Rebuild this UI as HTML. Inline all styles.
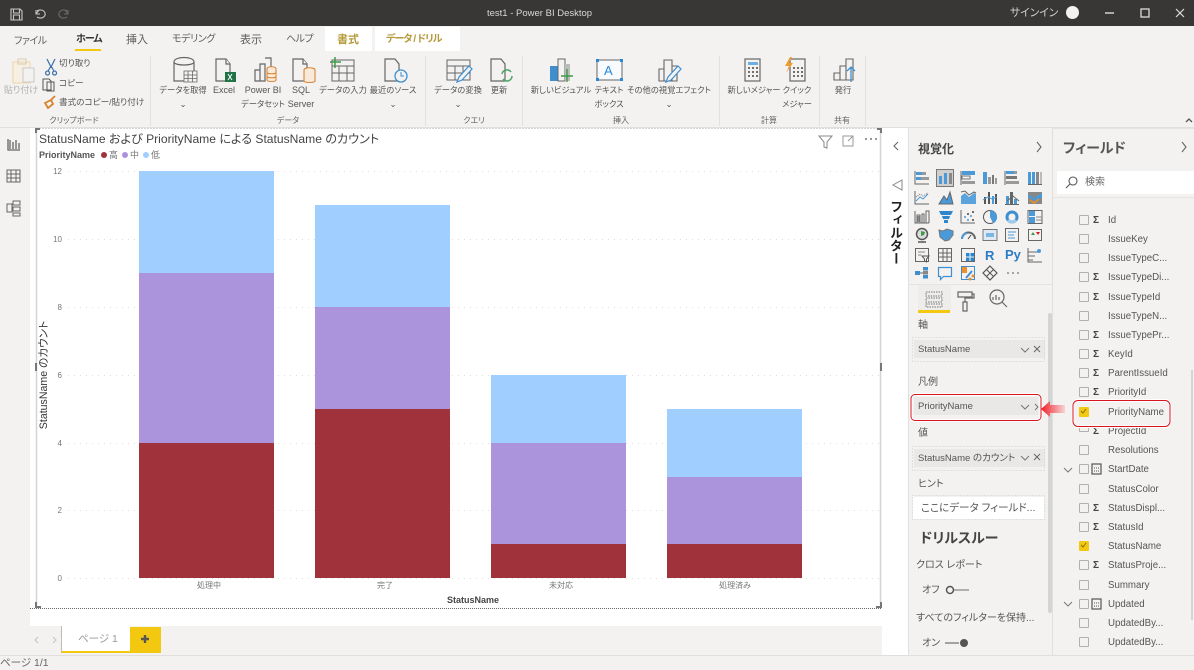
<!DOCTYPE html>
<html lang="ja"><head><meta charset="utf-8"><title>test1 - Power BI Desktop</title>
<style>
html,body{margin:0;padding:0;width:1194px;height:670px;overflow:hidden;background:#f3f2f1}
body{font-family:"Liberation Sans","Noto Sans CJK JP",sans-serif;color:#555;position:relative;font-feature-settings:"palt";filter:blur(.3px)}
div,span{position:absolute;white-space:nowrap}
i{font-style:normal;font-size:9px}
svg{position:absolute;left:0;top:0}
.r{font-size:8.300px;line-height:13.500px;text-align:center;transform:translateX(-50%);color:#555}
.c{font-size:8.600px;line-height:13.500px;color:#555}
.g{font-size:8px;line-height:12px;transform:translateX(-50%);color:#666}
.t{font-size:10px;top:32px;line-height:16px;color:#605e5c}
.f{font-size:9.700px;left:1108px;line-height:14px;color:#555;margin-top:1px}
.cb{left:1079px;width:8px;height:8px;border:1px solid #b0b0b0;border-radius:1px;background:#f3f2f1}
.s{left:1093px;font-size:10px;font-weight:bold;line-height:14px;color:#444;margin-top:1px}
.l{font-size:10px;color:#555;line-height:14px;margin-top:1px}
.w{background:#e9e8e7;left:914px;width:131px;height:18px;font-size:9.500px;line-height:20px;text-indent:4px;color:#555}
.y{font-size:8px;color:#777;width:24px;text-align:right;left:38px;line-height:10px;margin-top:1px}
.x{font-size:8px;color:#777;top:580px;line-height:11px;transform:translateX(-50%)}
</style></head><body>

<div style="left:0;top:0;width:1194px;height:26px;background:#383735"></div>
<div style="left:487px;top:6px;font-size:9.500px;line-height:15px;color:#d8d8d8">test1 - Power BI Desktop</div>
<div style="left:1010px;top:6px;font-size:10.800px;line-height:15px;color:#d0d0d0">サインイン</div>
<div style="left:1066px;top:6px;width:13px;height:13px;border-radius:50%;background:#f2f2f2"></div>

<div style="left:325px;top:27px;width:47px;height:24px;background:#fff"></div>
<div style="left:375px;top:27px;width:85px;height:24px;background:#fff"></div>
<div class="t" style="left:14px;top:34px;letter-spacing:-.5px">ファイル</div>
<div class="t" style="left:76px;color:#333;font-weight:bold;letter-spacing:-1px">ホーム</div>
<div style="left:75px;top:49px;width:26px;height:2px;background:#f2c811"></div>
<div class="t" style="left:126px;font-size:11px">挿入</div>
<div class="t" style="left:172px;letter-spacing:-.4px">モデリング</div>
<div class="t" style="left:240px;font-size:11px">表示</div>
<div class="t" style="left:286px;letter-spacing:-.5px">ヘルプ</div>
<div class="t" style="left:337px;font-size:11px;color:#b59a3a;font-weight:bold">書式</div>
<div class="t" style="left:386px;color:#b59a3a;font-weight:bold;letter-spacing:-.9px">データ / ドリル</div>

<div class="r" style="left:21px;top:84px;color:#b0b0b0;font-size:9px">貼り付け</div>
<div class="c" style="left:59px;top:57px">切り取り</div>
<div class="c" style="left:59px;top:77px">コピー</div>
<div class="c" style="left:59px;top:96px">書式のコピー/貼り付け</div>
<div class="g" style="left:74px;top:115px">クリップボード</div>
<div class="r" style="left:183px;top:84px">データを取得<br>⌄</div>
<div class="r" style="left:224px;top:84px"><i>Excel</i></div>
<div class="r" style="left:263px;top:84px"><i>Power BI</i><br>データセット</div>
<div class="r" style="left:301px;top:84px"><i>SQL</i><br><i>Server</i></div>
<div class="r" style="left:343px;top:84px">データの入力</div>
<div class="r" style="left:393px;top:84px">最近のソース<br>⌄</div>
<div class="g" style="left:288px;top:115px">データ</div>
<div class="r" style="left:458px;top:84px">データの変換<br>⌄</div>
<div class="r" style="left:499px;top:84px">更新</div>
<div class="g" style="left:474px;top:115px">クエリ</div>
<div class="r" style="left:561px;top:84px">新しいビジュアル</div>
<div class="r" style="left:609px;top:84px">テキスト<br>ボックス</div>
<div class="r" style="left:669px;top:84px">その他の視覚エフェクト<br>⌄</div>
<div class="g" style="left:621px;top:115px">挿入</div>
<div class="r" style="left:754px;top:84px">新しいメジャー</div>
<div class="r" style="left:797px;top:84px">クイック<br>メジャー</div>
<div class="g" style="left:769px;top:115px">計算</div>
<div class="r" style="left:843px;top:84px">発行</div>
<div class="g" style="left:842px;top:115px">共有</div>

<div style="left:0;top:127px;width:1194px;height:1px;background:#e1dfdd"></div>
<div style="left:30px;top:128px;width:852px;height:498px;background:#fff"></div>
<div style="left:882px;top:128px;width:26px;height:527px;background:#fff"></div>
<div style="left:0;top:655px;width:1194px;height:15px;background:#f3f2f1;border-top:1px solid #e1dfdd;box-sizing:border-box"></div>

<div style="left:39px;top:131px;font-size:12.100px;line-height:16px;color:#444">StatusName および PriorityName による StatusName のカウント</div>
<div style="left:39px;top:149px;font-size:9px;line-height:13px;font-weight:bold;color:#555">PriorityName</div>
<div style="left:109px;top:148px;font-size:9px;line-height:14px;color:#777">高</div>
<div style="left:130px;top:148px;font-size:9px;line-height:14px;color:#777">中</div>
<div style="left:151px;top:148px;font-size:9px;line-height:14px;color:#777">低</div>
<div class="y" style="top:166px">12</div>
<div class="y" style="top:234px">10</div>
<div class="y" style="top:302px">8</div>
<div class="y" style="top:370px">6</div>
<div class="y" style="top:438px">4</div>
<div class="y" style="top:505px">2</div>
<div class="y" style="top:573px">0</div>
<div class="x" style="left:209px">処理中</div>
<div class="x" style="left:385px">完了</div>
<div class="x" style="left:561px">未対応</div>
<div class="x" style="left:735px">処理済み</div>
<div style="left:447px;top:594px;font-size:9px;line-height:12px;font-weight:bold;color:#444">StatusName</div>
<div style="left:-16px;top:369px;width:120px;height:12px;text-align:center;font-size:10.600px;line-height:12px;color:#333;transform:rotate(-90deg)">StatusName のカウント</div>

<div style="left:61px;top:626px;width:68px;height:25px;background:#fff;border-left:1px solid #bbb;border-bottom:2px solid #f2c811"></div>
<div style="left:78px;top:632px;font-size:10.500px;line-height:14px;color:#999">ページ 1</div>
<div style="left:130px;top:627px;width:31px;height:26px;background:#f2c811"></div>
<div style="left:0;top:656px;font-size:10.500px;line-height:15px;color:#666">ページ 1/1</div>

<svg width="1194" height="670" viewBox="0 0 1194 670" fill="none">
 <g stroke="#c8c8c8" stroke-width="1.100"><path d="M11 9h9l2 2v9H11zM13.500 9v4h6V9M13.500 20v-5h6v5"/></g>
 <path d="M36 14l3-4M36 10v4h4M37 17c5 3 9-1 8-4-1-3-5-4-8-2" stroke="#c4c4c4" stroke-width="1.100"/>
 <path d="M68 14l-3-4M68 10v4h-4M67 17c-5 3-9-1-8-4 1-3 5-4 8-2" stroke="#6a6a6a" stroke-width="1.100"/>
 <path d="M1105 13h9" stroke="#ddd" stroke-width="1.400"/><rect x="1141" y="9" width="8" height="8" stroke="#ddd" stroke-width="1.300"/>
 <path d="M1176 9l8 8M1184 9l-8 8" stroke="#ddd" stroke-width="1.200"/>
 <path d="M1186 122l3-3 3 3" stroke="#555" stroke-width="1.300"/>

 <g stroke="#e3e1df" stroke-width="1"><path d="M150.500 56v70M425.500 56v70M522.500 56v70M719.500 56v70M819.500 56v70M865.500 56v70"/></g>

 <rect x="13" y="62" width="17" height="21" stroke="#eed9b8" stroke-width="1.200" fill="#f7efe1"/><rect x="23" y="68" width="11" height="14" fill="#f3f2f1" stroke="#c9c9c9"/><rect x="18" y="59" width="8" height="5" stroke="#d9c9b0"/>
 <path d="M47 59l4 8 4-8M47.500 71a2 2 0 1 0 .1 0M54.500 71a2 2 0 1 0 .1 0M51 66l-3 5M51 66l3 5" stroke="#3d6fa8" stroke-width="1.200"/>
 <path d="M43 79h6l2 2v9h-8zM47 82h7v9h-7z" stroke="#555" fill="#f3f2f1"/>
 <path d="M45 103l6-3 2 4-5 4zM51 100l4-4" stroke="#d8832c" stroke-width="1.800"/>

 <g stroke="#666" stroke-width="1.200" fill="#f3f2f1">
  <path d="M174 62c0-6 20-6 20 0v19h-20z"/><path d="M174 62c0 4 20 4 20 0"/><path d="M184 71h13v11h-13zM184 75h13M184 78.500h13M188 71v11M192.500 71v11" stroke-width=".8"/>
  <path d="M216 59h10l4 5v17h-14z"/><path d="M226 59v5h4"/>
  <path d="M255 70h5v11h-5zM260 64h5v17h-5zM265 58h6v12"/>
  <path d="M293 59h10l4 5v17h-14z"/><path d="M303 59v5h4"/>
 </g>
 <rect x="225" y="72" width="11" height="10" fill="#217346"/><path d="M228 74l4 6M232 74l-4 6" stroke="#fff"/>
 <path d="M267 69c0-3 9-3 9 0v11c0 2-9 2-9 0zM267 73c2 1 7 1 9 0M267 77c2 1 7 1 9 0" stroke="#d8873a" stroke-width="1.100" fill="#f8e9d8"/>
 <path d="M304 70c0-3 11-3 11 0v11c0 2-11 2-11 0z" stroke="#d8873a" stroke-width="1.100" fill="#f8e9d8"/>
 <g stroke="#666" stroke-width="1"><path d="M332 60h22v21h-22zM332 66h22M332 73h22M339 66v15M347 66v15"/></g>
 <path d="M335 57v11M330 62h11" stroke="#3f9a4a" stroke-width="1.500"/>
 <path d="M385 59h10l4 5v17h-14z" stroke="#666" stroke-width="1.200" fill="#f3f2f1"/>
 <circle cx="401" cy="76" r="6" stroke="#3f8fcf" stroke-width="1.300" fill="#f3f2f1"/><path d="M401 72v4h3" stroke="#3f8fcf"/>
 <g stroke="#666" stroke-width="1"><path d="M447 60h23v20h-23zM447 66h23M447 73h23M455 66v14M463 66v14"/></g>
 <path d="M457 82l2-5 10-11 3 3-10 11z" stroke="#3f8fcf" stroke-width="1.200" fill="#f3f2f1"/>
 <path d="M491 59h10l4 5v17h-14z" stroke="#666" stroke-width="1.200" fill="#f3f2f1"/>
 <path d="M502 74a5 5 0 0 1 9-2M512 76a5 5 0 0 1-9 3" stroke="#4aa564" stroke-width="1.500"/>
 <rect x="550" y="66" width="8" height="15" fill="#3f8fcf"/><rect x="558" y="59" width="7" height="22" stroke="#666" fill="#f3f2f1"/><rect x="565" y="64" width="5" height="17" fill="#bbb"/>
 <path d="M567 69v13M561 76h12" stroke="#3f9a4a" stroke-width="1.400"/>
 <rect x="597" y="60" width="25" height="20" stroke="#666" fill="#f8fbfe"/><g fill="#2b88d8"><rect x="596" y="59" width="3" height="3"/><rect x="620" y="59" width="3" height="3"/><rect x="596" y="78" width="3" height="3"/><rect x="620" y="78" width="3" height="3"/></g>
 <text x="604" y="75" font-family="Liberation Sans" font-size="13" fill="#2b88d8">A</text>
 <path d="M659 69h5v12h-5zM664 60h8v21h-8zM672 66h5v15h-5z" stroke="#666" stroke-width="1.100" fill="#f3f2f1"/>
 <path d="M666 82l2-5 10-11 3 3-10 11z" stroke="#3f8fcf" stroke-width="1.200" fill="#f3f2f1"/>
 <rect x="745" y="59" width="15" height="22" stroke="#666" stroke-width="1.200" fill="#f3f2f1"/><rect x="748" y="62" width="10" height="3" fill="#6eaee0"/><path d="M748 68h10M748 72h10M748 76h10" stroke="#444" stroke-width="1.600" stroke-dasharray="2 2"/>
 <rect x="790" y="59" width="15" height="22" stroke="#666" stroke-width="1.200" fill="#f3f2f1"/><path d="M793 68h10M793 72h10M793 76h10" stroke="#444" stroke-width="1.600" stroke-dasharray="2 2"/>
 <path d="M790 57l-5 9h4l-3 7 7-10h-4l3-6z" fill="#ed9d2e"/>
 <path d="M834 73h6v7h-6zM840 66h6v14h-6zM846 59h7v21h-7z" stroke="#666" stroke-width="1.100" fill="#f3f2f1"/><path d="M851 82V67M847 71l4-4 4 4" stroke="#3f8fcf" stroke-width="1.300"/>

 <g stroke="#666" stroke-width="1"><path d="M8 139v11h12M10 140v9M13 142v7M16 140v9M19 143v6" stroke-width="1.300"/><path d="M7 170h13v12H7zM7 174h13M7 178h13M11 170v12M16 170v12"/><path d="M13 201h7v4h-7zM13 207h7v4h-7zM13 213h7v3h-7zM7 204h5v8H7z"/></g>

 <g stroke="#e0e0e0" stroke-width="1" stroke-dasharray="1 5">
  <path d="M68 171.500h812M68 239.500h812M68 307.500h812M68 375.500h812M68 443.500h812M68 510.500h812M68 578.500h812"/>
 </g>
 <rect x="139" y="171" width="135" height="102" fill="#a0cfff"/><rect x="139" y="273" width="135" height="170" fill="#ab94dc"/><rect x="139" y="443" width="135" height="135" fill="#a0323c"/>
 <rect x="315" y="205" width="135" height="102" fill="#a0cfff"/><rect x="315" y="307" width="135" height="102" fill="#ab94dc"/><rect x="315" y="409" width="135" height="169" fill="#a0323c"/>
 <rect x="491" y="375" width="135" height="68" fill="#a0cfff"/><rect x="491" y="443" width="135" height="101" fill="#ab94dc"/><rect x="491" y="544" width="135" height="34" fill="#a0323c"/>
 <rect x="667" y="409" width="135" height="68" fill="#a0cfff"/><rect x="667" y="477" width="135" height="67" fill="#ab94dc"/><rect x="667" y="544" width="135" height="34" fill="#a0323c"/>
 <circle cx="104" cy="155" r="3" fill="#a0323c"/><circle cx="125" cy="155" r="3" fill="#ab94dc"/><circle cx="146" cy="155" r="3" fill="#a0cfff"/>

 <path d="M36.500 129v476M880.500 129v476" stroke="#d4d4d4" stroke-width="1.500"/>
 <path d="M30 608.500h852" stroke="#666" stroke-dasharray="1 1"/><path d="M36 128.500h845" stroke="#d4d4d4" stroke-dasharray="2 1"/>
 <path d="M36 133v-4h4M881 133v-4h-4M36 602v5h5M881 602v5h-5" stroke="#777" stroke-width="2"/>
 <path d="M36 363v8M881 363v8" stroke="#777" stroke-width="2"/>
 <path d="M819 136h13l-5 6v6l-3-1v-5z" stroke="#888"/><path d="M843 136h10v10h-10zM848 141l5-5M849 136h4v4" stroke="#999"/>
 <path d="M865 139h2M870 139h2M875 139h2" stroke="#777" stroke-width="1.500"/>

 <path d="M38 637l-3 3 3 3M53 637l3 3-3 3" stroke="#c8c8c8" stroke-width="1.200"/>
 <path d="M145 635v8M141 639h8" stroke="#555" stroke-width="2.400"/>

 <path d="M898 142l-4 4 4 4M1037 142l4 5-4 5M1182 142l4 5-4 5" stroke="#666" stroke-width="1.100"/>
 <path d="M902 180l-9 5 9 5z" stroke="#888"/>
 <path d="M908.500 128v527M1052.500 128v527" stroke="#e1dfdd"/>
 <path d="M908 284.500h144M1053 197.500h141M1053 128.500h141" stroke="#e6e4e2"/>

 <g transform="translate(922 178)"><rect x="-6" y="-6" width="6" height="3" fill="#4a9ad9"/><rect x="0" y="-6" width="4" height="3" fill="#999"/><rect x="-6" y="-1" width="5" height="3" fill="#4a9ad9"/><rect x="-1" y="-1" width="8" height="3" fill="#999"/><path d="M-7-7V6H7" stroke="#666"/></g>
 <g transform="translate(945 178)"><rect x="-8.500" y="-8.500" width="17" height="17" fill="#cfcfcf" stroke="#777"/><rect x="-6" y="-2" width="3" height="8" fill="#4a9ad9"/><rect x="-1" y="-5" width="3" height="11" fill="#4a9ad9"/><rect x="4" y="-5" width="3" height="11" fill="#888"/></g>
 <g transform="translate(968 178)"><rect x="-6" y="-7" width="13" height="4" fill="#4a9ad9"/><rect x="-6" y="-2" width="8" height="3" fill="#f3f2f1" stroke="#777"/><rect x="-6" y="3" width="13" height="3" fill="#999"/><path d="M-7-7V7" stroke="#666"/></g>
 <g transform="translate(990 178)"><rect x="-7" y="-6" width="4" height="12" fill="#4a9ad9"/><rect x="-2" y="-1" width="3" height="7" fill="#999"/><rect x="2" y="-3" width="2" height="9" fill="#777"/><rect x="5" y="0" width="2" height="6" fill="#999"/></g>
 <g transform="translate(1012 178)"><rect x="-6" y="-7" width="8" height="3" fill="#4a9ad9"/><rect x="2" y="-7" width="3" height="3" fill="#999"/><rect x="-6" y="-2" width="11" height="3" fill="#777"/><rect x="-6" y="3" width="13" height="3" fill="#999"/><path d="M-7-7V7" stroke="#666"/></g>
 <g transform="translate(1035 178)"><rect x="-7" y="-6" width="3" height="12" fill="#4a9ad9"/><rect x="-3" y="-6" width="3" height="12" fill="#4a9ad9"/><rect x="1" y="-6" width="3" height="12" fill="#888"/><rect x="5" y="-6" width="2" height="12" fill="#bbb"/><path d="M-7 6.500H7" stroke="#666"/></g>

 <g transform="translate(922 198)"><path d="M-7-7V6H7" stroke="#666"/><path d="M-6 3l4-4 3 2 5-5" stroke="#4a9ad9"/><path d="M-6-1l4-3 3 2 5-3" stroke="#777" stroke-dasharray="1 1"/></g>
 <g transform="translate(946 198)"><path d="M-7 6l5-8 3 4 3-8 3 12z" fill="#4a9ad9" stroke="#666"/></g>
 <g transform="translate(968 198)"><path d="M-7-2l4-3 4 4 5-4 2 1v10H-7z" fill="#5aa3dc"/><path d="M-7-6l4-1 4 4 5-3 2 1" stroke="#666"/></g>
 <g transform="translate(990 198)"><rect x="-6" y="-1" width="2" height="7" fill="#555"/><rect x="-2" y="-6" width="2" height="12" fill="#555"/><rect x="2" y="-2" width="2" height="8" fill="#4a9ad9"/><rect x="5" y="-4" width="2" height="10" fill="#555"/><path d="M-7 2l5-3 4 2 5-2" stroke="#4a9ad9"/></g>
 <g transform="translate(1012 198)"><rect x="-6" y="-2" width="3" height="8" fill="#4a9ad9"/><rect x="-2" y="-6" width="3" height="12" fill="#666"/><rect x="2" y="1" width="3" height="5" fill="#4a9ad9"/><path d="M-7 6.500H7M-5 3l6-5 6 5" stroke="#666"/></g>
 <g transform="translate(1035 198)"><rect x="-7" y="-6" width="14" height="12" fill="#888"/><path d="M-7-4l5 4 4-2 5-3v4l-5 4-4-1-5-3z" fill="#4a9ad9"/><path d="M-5 2l4 3 5-4" stroke="#e8912d" stroke-width="1.500"/></g>

 <g transform="translate(922 217)"><path d="M-7-6V6H7M-5 6v-8h3v8M0 6V-3h2v9M4 6V-6h3v12" stroke="#666"/><rect x="-4.500" y="-1" width="2" height="6" fill="#888"/></g>
 <g fill="#2e86cc" transform="translate(946 217)"><path d="M-7-6H7L5-2H-5zM-4-1H4L3 2H-3zM-2 3H2V6H-2z"/></g>
 <g transform="translate(968 217)"><path d="M-7-7V6H7" stroke="#666"/><g fill="#4a9ad9"><circle cx="-3" cy="0" r="1"/><circle cx="0" cy="3" r="1"/><circle cx="3" cy="-1" r="1"/></g><g fill="#444"><circle cx="5" cy="-5" r="1"/><circle cx="0" cy="-3" r="1"/><circle cx="5" cy="3" r="1"/></g></g>
 <g transform="translate(990 217)"><circle r="6.500" fill="#f3f2f1" stroke="#555"/><path d="M0-6.500A6.500 6.500 0 0 1 3 6L0 0z" fill="#4a9ad9"/></g>
 <g transform="translate(1012 217)"><circle r="5" stroke="#3f8fcf" stroke-width="3"/><path d="M-4 3A5 5 0 0 0 4 3" stroke="#9ccbef" stroke-width="3"/></g>
 <g transform="translate(1035 217)"><rect x="-7" y="-6.500" width="14" height="13" fill="#f3f2f1" stroke="#666"/><rect x="-6" y="-6" width="6" height="5" fill="#4a9ad9"/><rect x="-6" y="0" width="6" height="6" fill="#4a9ad9"/><path d="M1 0H7M1 3H7" stroke="#888"/></g>

 <g transform="translate(922 235)"><circle cy="-1" r="5.500" fill="#ddd" stroke="#555" stroke-width="1.500"/><path d="M-1-4l4 1-1 3-3 1z" fill="#3f9a4a"/><path d="M-4 7h8" stroke="#555" stroke-width="1.500"/></g>
 <g transform="translate(946 235)"><path d="M-7-5l4 1 4-2 6 2v4l-4 5-4 1-5-4z" fill="#4a9ad9" stroke="#777"/></g>
 <g transform="translate(968 235)"><path d="M-6 4a6.500 6.500 0 0 1 13 0" stroke="#666" stroke-width="2"/><path d="M-6 4a6.500 6.500 0 0 1 5-6" stroke="#4a9ad9" stroke-width="2"/><path d="M0 4l3-4" stroke="#444"/></g>
 <g transform="translate(990 235)"><rect x="-7" y="-5.500" width="14" height="11" fill="#dfe9f3" stroke="#777"/><rect x="-4" y="-2" width="8" height="4" fill="#7db5e3"/></g>
 <g transform="translate(1012 235)"><rect x="-6.500" y="-6.500" width="13" height="13" fill="#f3f2f1" stroke="#666"/><path d="M-4-3H4M-4 0H2M-4 3H3" stroke="#4a9ad9"/></g>
 <g transform="translate(1035 235)"><rect x="-6.500" y="-5.500" width="13" height="11" fill="#f3f2f1" stroke="#666"/><path d="M-4 0l2-3 2 3z" fill="#3f9a4a"/><path d="M1-3h4l-2 3z" fill="#d8141e"/></g>

 <g transform="translate(922 255)"><rect x="-6.500" y="-6.500" width="13" height="13" fill="#f3f2f1" stroke="#666"/><path d="M-4-3H3M-4 0H-1" stroke="#888"/><path d="M0 1H7L4.500 4V7L2.500 6V4z" fill="#f3f2f1" stroke="#555"/></g>
 <g transform="translate(945 255)" stroke="#666"><path d="M-6.500-6.500h13v13h-13zM-6.500-2h13M-6.500 2h13M-2-6.500v13M2-6.500v13"/></g>
 <g transform="translate(968 255)"><rect x="-6.500" y="-6.500" width="13" height="13" fill="#f3f2f1" stroke="#666"/><rect x="-2" y="-2" width="8" height="8" fill="#2e86cc"/><path d="M2-2V6M-2 2H6" stroke="#f3f2f1"/></g>
 <g transform="translate(1035 255)"><path d="M-7-7V7H7M-7-3H3M-7 1H0M-7 5H-2" stroke="#666"/><circle cx="4" cy="-4" r="2" fill="#4a9ad9"/></g>

 <g transform="translate(922 273)"><rect x="-7" y="-2" width="5" height="4" fill="#3f8fcf"/><path d="M-2 0H1" stroke="#666"/><rect x="1" y="-6" width="5" height="3.500" fill="#3f8fcf"/><rect x="1" y="-2" width="5" height="3.500" fill="#888"/><rect x="1" y="2" width="5" height="3.500" fill="#3f8fcf"/></g>
 <g transform="translate(945 273)"><path d="M-6.500-5.500h13v9h-8l-3 3v-3h-2z" fill="#f3f2f1" stroke="#3f8fcf" stroke-width="1.200"/></g>
 <g transform="translate(968 273)"><rect x="-6.500" y="-6.500" width="13" height="13" fill="#f3f2f1" stroke="#3f8fcf"/><path d="M-6-6h5v6h-5z" fill="#e8912d"/><path d="M-2 5L4-2" stroke="#3f8fcf" stroke-width="2"/><circle cx="5" cy="3" r="1.500" fill="#e8912d"/><circle cx="2" cy="6" r="1.500" fill="#e8912d"/></g>
 <g transform="translate(990 273)"><path d="M0-7L7 0 0 7-7 0z" fill="#f3f2f1" stroke="#555" stroke-width="1.200"/><path d="M-3.500-3.500l7 7M3.500-3.500l-7 7" stroke="#555"/></g>
 <path d="M1007 273h2M1012 273h2M1017 273h2" stroke="#777" stroke-width="1.300"/>
 <text x="985" y="260" font-family="Liberation Sans" font-weight="bold" font-size="13" fill="#2b7cc4">R</text>
 <text x="1005" y="259" font-family="Liberation Sans" font-weight="bold" font-size="13" fill="#2b7cc4">Py</text>

 <rect x="918" y="285" width="33" height="26" fill="#eeedec"/>
 <rect x="918" y="310" width="32" height="3" fill="#f2c811"/>
 <path d="M926 292h16v4h-16zM926 298h16v4h-16zM926 304h16v3h-16z" stroke="#777" stroke-dasharray="1.500 1"/>
 <path d="M958 292h14v5h-14zM972 294h2v4h-9v4M963 302h4v9h-4z" stroke="#666" stroke-width="1.200"/>
 <circle cx="997" cy="297" r="7" stroke="#666" stroke-width="1.200"/><path d="M1002 302l5 5M993 300v-3M996 300v-5M999 300v-3" stroke="#666" stroke-width="1.200"/>

 <rect x="1048" y="313" width="4" height="300" rx="2" fill="#d4d4d4"/>
 <circle cx="950" cy="590" r="3.500" stroke="#555" stroke-width="1.500"/><path d="M954 590h15" stroke="#999" stroke-width="1.500"/>
 <path d="M945 643h14" stroke="#888" stroke-width="1.500"/><circle cx="964" cy="643" r="4" fill="#555"/>
 <path d="M1064 468l4 4 4-4M1064 602l4 4 4-4" stroke="#777"/>
 <rect x="1092" y="464" width="9" height="10" stroke="#555" stroke-width="1.200"/><path d="M1094 468h5M1094 471h5" stroke="#555" stroke-dasharray="1 1"/>
 <rect x="1092" y="599" width="9" height="10" stroke="#555" stroke-width="1.200"/><path d="M1094 603h5M1094 606h5" stroke="#555" stroke-dasharray="1 1"/>
 <path d="M1192 370v250" stroke="#d4d4d4" stroke-width="2"/>
</svg>

<div style="left:918px;top:141px;font-size:12px;line-height:16px;font-weight:bold;color:#444">視覚化</div>
<div style="left:1063px;top:140px;font-size:14px;line-height:17px;font-weight:bold;color:#555">フィールド</div>
<div style="left:888px;top:200px;font-size:13px;line-height:15px;font-weight:bold;color:#222;writing-mode:vertical-rl;font-feature-settings:normal">フィルター</div>
<div style="left:1057px;top:171px;width:137px;height:23px;background:#fff"></div>
<div style="left:1085px;top:175px;font-size:10px;line-height:15px;color:#666">検索</div>

<div class="l" style="left:918px;top:318px">軸</div>
<div class="w" style="top:340px">StatusName</div>
<div class="l" style="left:918px;top:375px">凡例</div>
<div class="w" style="top:397px;width:124px">PriorityName</div>
<div class="l" style="left:918px;top:426px">値</div>
<div class="w" style="top:449px">StatusName のカウント</div>
<div class="l" style="left:918px;top:477px">ヒント</div>
<div style="left:913px;top:497px;width:131px;height:22px;background:#fff;font-size:10.500px;line-height:23px;text-indent:8px;color:#555">ここにデータ フィールド...</div>
<div style="left:920px;top:530px;font-size:14px;line-height:17px;font-weight:bold;color:#444">ドリルスルー</div>
<div class="l" style="left:916px;top:558px">クロス レポート</div>
<div class="l" style="left:922px;top:583px">オフ</div>
<div class="l" style="left:916px;top:611px">すべてのフィルターを保持...</div>
<div class="l" style="left:922px;top:636px">オン</div>

<div class="cb" style="top:215px"></div><div class="s" style="top:213px">Σ</div><div class="f" style="top:213px">Id</div>
<div class="cb" style="top:234px"></div><div class="f" style="top:232px">IssueKey</div>
<div class="cb" style="top:253px"></div><div class="f" style="top:251px">IssueTypeC...</div>
<div class="cb" style="top:272px"></div><div class="s" style="top:270px">Σ</div><div class="f" style="top:270px">IssueTypeDi...</div>
<div class="cb" style="top:292px"></div><div class="s" style="top:290px">Σ</div><div class="f" style="top:290px">IssueTypeId</div>
<div class="cb" style="top:311px"></div><div class="f" style="top:309px">IssueTypeN...</div>
<div class="cb" style="top:330px"></div><div class="s" style="top:328px">Σ</div><div class="f" style="top:328px">IssueTypePr...</div>
<div class="cb" style="top:349px"></div><div class="s" style="top:347px">Σ</div><div class="f" style="top:347px">KeyId</div>
<div class="cb" style="top:368px"></div><div class="s" style="top:366px">Σ</div><div class="f" style="top:366px">ParentIssueId</div>
<div class="cb" style="top:387px"></div><div class="s" style="top:385px">Σ</div><div class="f" style="top:385px">PriorityId</div>
<div class="cb" style="top:407px;background:#f2c811;border-color:#f2c811"></div><div class="f" style="top:405px">PriorityName</div>
<div class="cb" style="top:428px;height:3px;border-top:0"></div><div class="s" style="top:424px">Σ</div><div class="f" style="top:424px">ProjectId</div>
<div class="cb" style="top:445px"></div><div class="f" style="top:443px">Resolutions</div>
<div class="cb" style="top:464px"></div><div class="f" style="top:462px">StartDate</div>
<div class="cb" style="top:484px"></div><div class="f" style="top:482px">StatusColor</div>
<div class="cb" style="top:503px"></div><div class="s" style="top:501px">Σ</div><div class="f" style="top:501px">StatusDispl...</div>
<div class="cb" style="top:522px"></div><div class="s" style="top:520px">Σ</div><div class="f" style="top:520px">StatusId</div>
<div class="cb" style="top:541px;background:#f2c811;border-color:#f2c811"></div><div class="f" style="top:539px">StatusName</div>
<div class="cb" style="top:560px"></div><div class="s" style="top:558px">Σ</div><div class="f" style="top:558px">StatusProje...</div>
<div class="cb" style="top:580px"></div><div class="f" style="top:578px">Summary</div>
<div class="cb" style="top:599px"></div><div class="f" style="top:597px">Updated</div>
<div class="cb" style="top:618px"></div><div class="f" style="top:616px">UpdatedBy...</div>
<div class="cb" style="top:637px"></div><div class="f" style="top:635px">UpdatedBy...</div>

<svg width="1194" height="670" viewBox="0 0 1194 670" fill="none">
 <circle cx="1073" cy="181" r="4" stroke="#555" stroke-width="1.100"/><path d="M1070 184l-4 4" stroke="#555" stroke-width="1.100"/>
 <path d="M912.500 337.500h132v24h-132zM912.500 446.500h132v24h-132zM912.500 495.500h132v24h-132z" stroke="#cfcfcf" stroke-dasharray="1 2"/>
 <path d="M1021 348l4 4 4-4M1021 405l4 4 4-4M1021 456l4 4 4-4" stroke="#777"/>
 <path d="M1034 346l6 6M1040 346l-6 6M1034 454l6 6M1040 454l-6 6" stroke="#666"/>
 <path d="M1035 404l3 3-3 3" stroke="#777"/>
 <rect x="911" y="394.500" width="130" height="26" rx="4" stroke="#fff" stroke-width="3"/>
 <rect x="1073" y="400.500" width="97" height="26" rx="5" stroke="#fff" stroke-width="3"/>
 <rect x="911" y="394.500" width="130" height="26" rx="4" stroke="#d8141e"/>
 <rect x="1073" y="400.500" width="97" height="26" rx="5" stroke="#d8141e"/>
 <defs><linearGradient id="ar" x1="0" x2="1"><stop offset="0" stop-color="#f01e28"/><stop offset="1" stop-color="#f8d4d6"/></linearGradient></defs>
 <path d="M1041 409l9-8v4h15v8h-15v4z" fill="url(#ar)"/>
 <path d="M1081 411l2 2 3-4M1081 545l2 2 3-4" stroke="#8a6d00"/>
</svg>
</body></html>
